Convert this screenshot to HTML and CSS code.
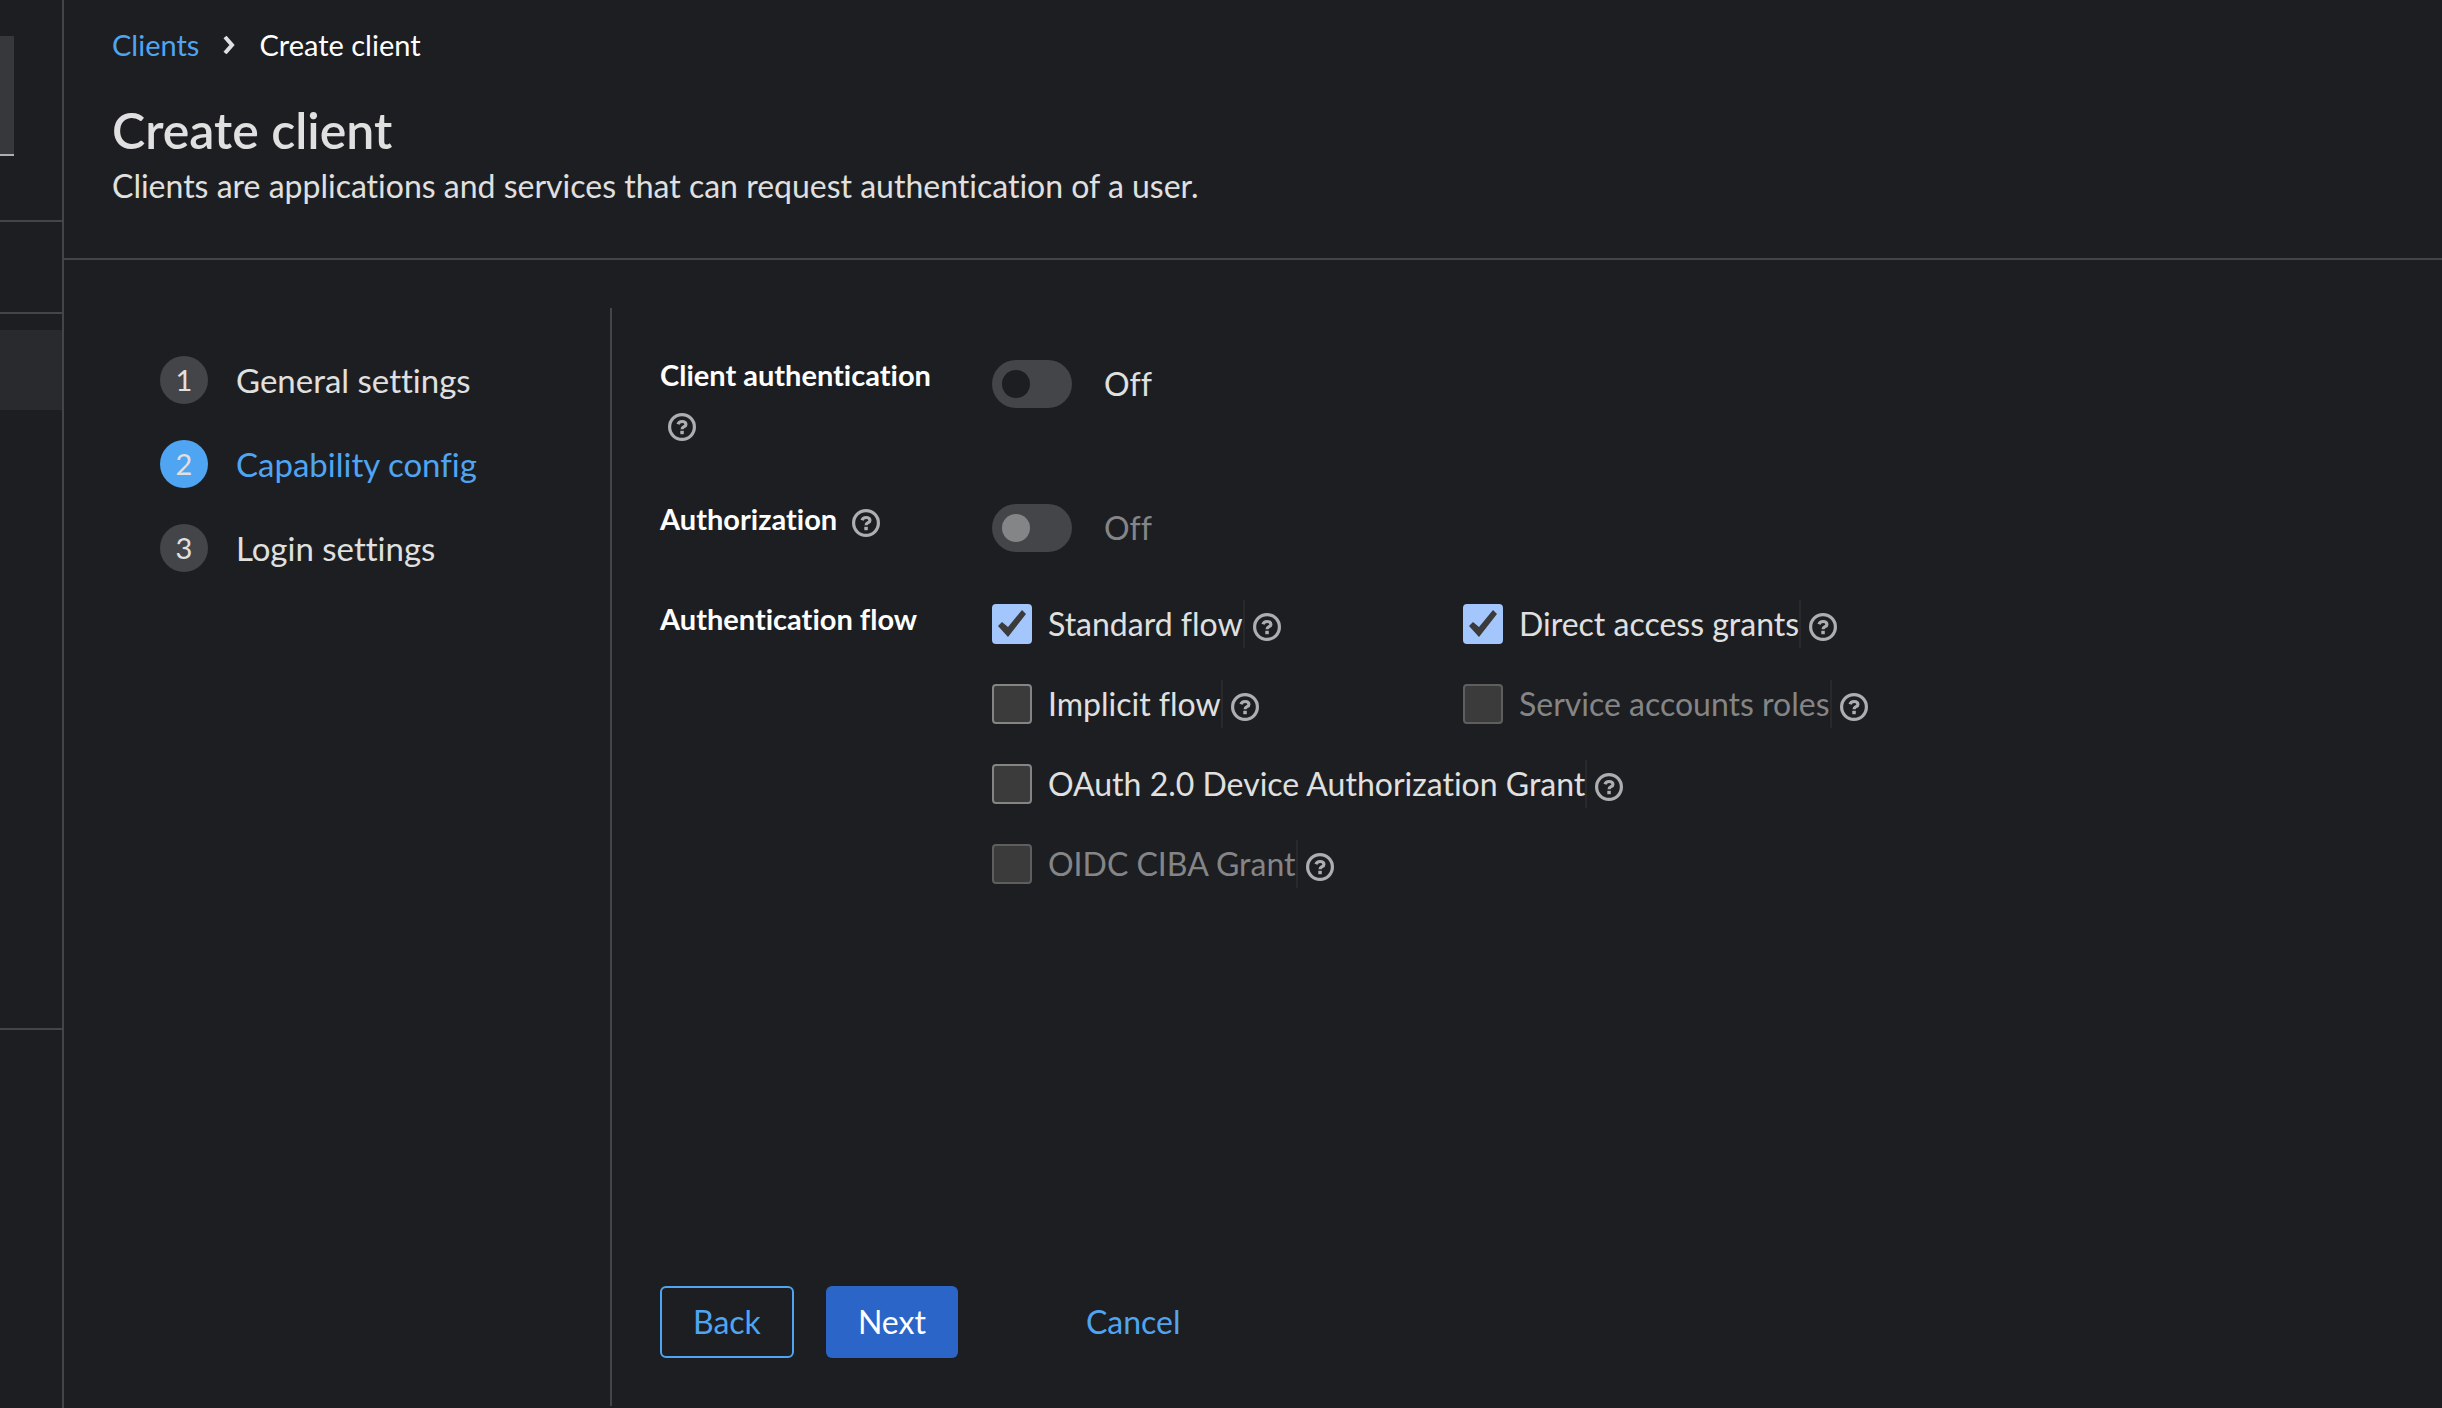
FILE: index.html
```html
<!DOCTYPE html>
<html lang="en">
<head>
<meta charset="utf-8">
<title>Create client</title>
<meta name="viewport" content="width=device-width, initial-scale=1">
<link rel="stylesheet" href="styles.css">
</head>
<body>
<svg class="defs" aria-hidden="true">
  <symbol id="help" viewBox="0 0 28 28">
    <circle cx="14" cy="14" r="12.4" fill="none" stroke="currentColor" stroke-width="3.2"/>
    <path d="M10 11.200C10.600 9.200 12.100 8.500 14 8.500c2.200 0 3.900 1 3.900 2.900 0 2.500-3.800 2.200-3.800 4.800" fill="none" stroke="currentColor" stroke-width="3.200"/>
    <rect x="12.300" y="17.800" width="3.500" height="3.400" fill="currentColor"/>
  </symbol>
</svg>
<aside class="sidebar">
  <div class="realm"></div>
  <div class="group group-top"></div>
  <nav class="group group-nav"><div class="current"></div></nav>
</aside>
<main class="page">
  <header class="head">
    <nav class="crumbs" aria-label="Breadcrumb">
      <a href="#">Clients</a>
      <svg class="chevron" viewBox="0 0 12 18" aria-hidden="true"><path d="M2 1l7 8-7 8" fill="none" stroke="currentColor" stroke-width="4"/></svg>
      <span>Create client</span>
    </nav>
    <h1>Create client</h1>
    <p>Clients are applications and services that can request authentication of a user.</p>
  </header>
  <div class="wizard">
    <nav class="steps" aria-label="Steps">
      <ol>
        <li><button type="button"><span class="num">1</span>General settings</button></li>
        <li><button type="button" class="active" aria-current="step"><span class="num">2</span>Capability config</button></li>
        <li><button type="button"><span class="num">3</span>Login settings</button></li>
      </ol>
    </nav>
    <form class="form">
      <div class="row row-tall">
        <div class="name"><label for="client-auth">Client authentication</label> <button type="button" class="help" aria-label="Help for client authentication"><svg><use href="#help"/></svg></button></div>
        <label class="toggle"><input type="checkbox" role="switch" id="client-auth"><span>Off</span></label>
      </div>
      <div class="row">
        <div class="name"><label for="authz">Authorization</label> <button type="button" class="help" aria-label="Help for authorization"><svg><use href="#help"/></svg></button></div>
        <label class="toggle"><input type="checkbox" role="switch" id="authz" disabled><span>Off</span></label>
      </div>
      <div class="row" role="group" aria-labelledby="flow-name">
        <div class="name" id="flow-name">Authentication flow</div>
        <div class="checks">
          <div class="check"><input type="checkbox" id="standard" checked><label for="standard">Standard flow</label><button type="button" class="help" aria-label="Help for standard flow"><svg><use href="#help"/></svg></button></div>
          <div class="check"><input type="checkbox" id="direct" checked><label for="direct">Direct access grants</label><button type="button" class="help" aria-label="Help for direct access grants"><svg><use href="#help"/></svg></button></div>
          <div class="check"><input type="checkbox" id="implicit"><label for="implicit">Implicit flow</label><button type="button" class="help" aria-label="Help for implicit flow"><svg><use href="#help"/></svg></button></div>
          <div class="check"><input type="checkbox" id="service" disabled><label for="service">Service accounts roles</label><button type="button" class="help" aria-label="Help for service accounts roles"><svg><use href="#help"/></svg></button></div>
          <div class="check wide"><input type="checkbox" id="device"><label for="device">OAuth 2.0 Device Authorization Grant</label><button type="button" class="help" aria-label="Help for device authorization grant"><svg><use href="#help"/></svg></button></div>
          <div class="check wide"><input type="checkbox" id="ciba" disabled><label for="ciba">OIDC CIBA Grant</label><button type="button" class="help" aria-label="Help for OIDC CIBA grant"><svg><use href="#help"/></svg></button></div>
        </div>
      </div>
      <footer class="actions">
        <button type="button" class="btn secondary">Back</button>
        <button type="button" class="btn primary">Next</button>
        <button type="button" class="btn link">Cancel</button>
      </footer>
    </form>
  </div>
</main>
</body>
</html>
```
FILE: styles.css
```css
:root {
  --bg: #1d1e21;
  --line: #444548;
  --text: #e0e0e0;
  --muted: #848587;
  --blue: #4fa5f2;
}
* { box-sizing: border-box; }
body {
  margin: 0;
  display: flex;
  min-height: 100vh;
  background: var(--bg);
  color: var(--text);
  font: 32px/48px Lato, "Noto Sans", sans-serif;
  font-variant-ligatures: none;
}
button { font: inherit; font-variant-ligatures: none; color: inherit; background: none; border: 0; padding: 0; cursor: pointer; }
.defs { position: absolute; width: 0; height: 0; }

.sidebar { flex: none; width: 64px; padding-top: 36px; border-right: 2px solid var(--line); }
.realm { width: 14px; height: 120px; background: #37383b; border-bottom: 2px solid #adaeb0; }
.group { border-bottom: 2px solid var(--line); }
.group-top { height: 66px; }
.group-nav { position: relative; height: 808px; padding-top: 108px; }
.group-nav::before { content: ""; position: absolute; top: 90px; width: 100%; border-top: 2px solid var(--line); }
.current { height: 80px; background: #292a2d; }

.page { flex: 1; min-width: 0; display: flex; flex-direction: column; }
.head { padding: 24px 48px 48px; border-bottom: 2px solid var(--line); }
.crumbs { display: flex; align-items: center; gap: 24px; font-size: 29px; line-height: 42px; color: #fff; }
.crumbs a { color: var(--blue); text-decoration: none; }
.chevron { width: 12px; height: 18px; color: var(--text); }
h1 { margin: 34px 0 2px; font-size: 50px; line-height: 60px; font-weight: 600; }
p { margin: 0; }

.wizard { flex: 1; display: flex; padding: 48px 0 2px; }
.steps { flex: none; width: 548px; padding: 48px 48px 0 96px; border-right: 2px solid var(--line); font-size: 33px; }
.steps ol { margin: 0; padding: 0; list-style: none; display: grid; gap: 36px; }
.steps li { display: flex; }
.steps button { display: flex; gap: 28px; }
.num { width: 48px; height: 48px; border-radius: 50%; background: var(--line); font-size: 29px; color: var(--text); }
.active { color: var(--blue); }
.active .num { background: var(--blue); }

.form { flex: 1; min-width: 0; display: flex; flex-direction: column; gap: 48px; padding: 48px; }
.row { display: grid; grid-template-columns: 284px 1fr; gap: 48px; }
.row-tall { min-height: 96px; }
.name { margin-top: -5px; font-size: 29px; line-height: 48px; font-weight: 700; color: #fff; }
.help { display: inline-flex; margin-left: 8px; vertical-align: middle; color: #adaeb0; }
.help svg { width: 28px; height: 28px; }
.toggle { display: flex; align-items: center; gap: 32px; height: 48px; margin-top: 4px; }
.toggle input { appearance: none; margin: 0; width: 80px; height: 48px; padding: 10px; border-radius: 24px; background: var(--line); }
.toggle input::before { content: ""; display: block; width: 28px; height: 28px; border-radius: 50%; background: var(--bg); }
.toggle input:disabled::before { background: var(--muted); }
input:disabled + * { color: var(--muted); }

.checks { display: grid; grid-template-columns: 447px 1fr; gap: 32px 24px; }
.wide { grid-column: 1 / -1; }
.check { display: flex; align-items: center; height: 48px; }
.check input { appearance: none; flex: none; margin: 0 16px 0 0; width: 40px; height: 40px; border: 2px solid #848485; border-radius: 4px; background: #3b3b3b; }
.check input:disabled { border-color: #5e5e5f; }
.check input:checked { border-color: #a3c7fc; background: #a3c7fc; }
.check input:checked::before { content: ""; display: block; width: 36px; height: 36px; background: #3b3b3b; clip-path: polygon(4px 20px, 8px 16px, 14px 21px, 28px 4px, 32px 8px, 14px 31px); }
.check label { border-right: 2px solid #28292c; }
.check .help { margin: 6px 0 0 8px; }

.actions { display: flex; gap: 32px; margin-top: auto; }
.btn { height: 72px; padding: 0 32px; border-radius: 6px; }
.secondary { border: 2px solid var(--blue); color: var(--blue); padding: 0 31px; }
.primary { background: #2b65c8; color: #fff; }
.link { color: var(--blue); margin-left: 64px; }
```
